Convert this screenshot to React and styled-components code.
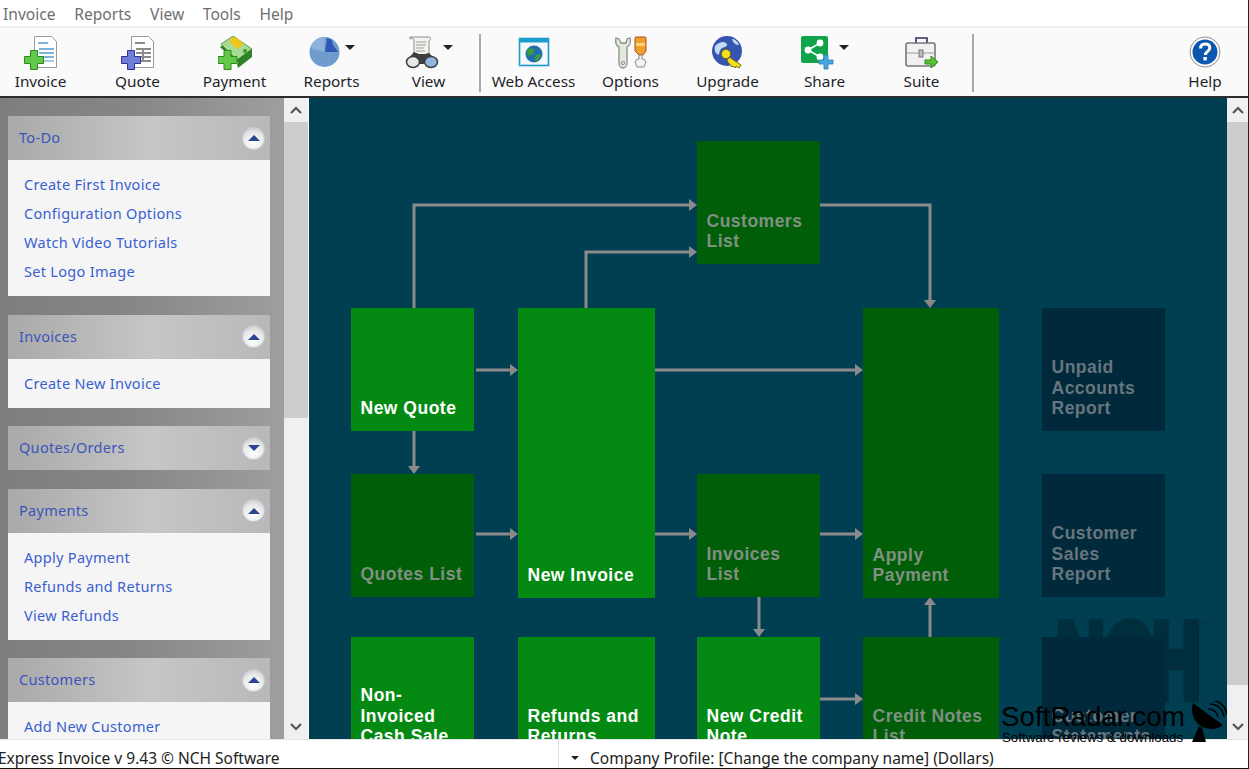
import React from "react";
import styled, { createGlobalStyle } from "styled-components";

const GlobalStyle = createGlobalStyle`
  html, body {
    margin: 0;
    height: 100%;
    overflow: hidden;
    background: #fff;
  }
  * { box-sizing: border-box; }
`;

const uiFont = `"Noto Sans", "Open Sans", sans-serif`;

const Shell = styled.div`
  position: relative;
  width: 1249px;
  height: 769px;
  display: flex;
  flex-direction: column;
  overflow: hidden;
  font-family: ${uiFont};
  border-right: 1px solid #222;
`;

const MenuBar = styled.nav`
  height: 28px;
  flex: none;
  display: flex;
  align-items: center;
  gap: 18.7px;
  padding: 1px 0 0 3px;
  background: #fff;
  border-bottom: 2px solid #f1f1f1;
`;

const MenuItem = styled.span`
  font-size: 15.6px;
  color: #6f6f6f;
`;

const Toolbar = styled.div`
  height: 70px;
  flex: none;
  display: flex;
  align-items: stretch;
  background: #fafafa;
  border-bottom: 2px solid #2c2c2c;
`;

const ToolButton = styled.button`
  width: ${(p) => p.$width || 97}px;
  margin-left: ${(p) => (p.$push ? "auto" : `${p.$shift || 0}px`)};
  flex: none;
  border: 0;
  background: none;
  padding: 8px 0 0;
  display: flex;
  flex-direction: column;
  align-items: center;
  font-family: inherit;
`;

const IconRow = styled.span`
  height: 35px;
  display: flex;
  align-items: flex-start;
  gap: 4px;
`;

const Caret = styled.i`
  width: 0;
  height: 0;
  margin-top: 9px;
  border-left: 5px solid transparent;
  border-right: 5px solid transparent;
  border-top: 5px solid #222;
`;

const ToolLabel = styled.span`
  font-size: 15.3px;
  line-height: 20px;
  color: #1f1f2a;
  white-space: nowrap;
`;

const ToolSep = styled.span`
  width: 2px;
  margin: 6px 4.5px 4px 1.5px;
  flex: none;
  background: #a8a8a8;
`;

const Main = styled.div`
  flex: 1;
  min-height: 0;
  display: flex;
`;

const Sidebar = styled.aside`
  width: 284px;
  flex: none;
  overflow: hidden;
  padding: 18px 14px 0 8px;
  display: flex;
  flex-direction: column;
  gap: 18.6px;
  background: linear-gradient(90deg, #7e7e7e 0%, #868686 45%, #9e9e9e 100%);
`;

const Panel = styled.section`
  flex: none;
`;

const PanelHead = styled.header`
  height: 44px;
  display: flex;
  align-items: center;
  justify-content: space-between;
  padding: 0 5px 0 11px;
  background: linear-gradient(90deg, #a9a9a9 0%, #c6c6c6 55%, #b8b8b8 100%);
`;

const PanelTitle = styled.span`
  margin-top: -2px;
  font-size: 14.5px;
  letter-spacing: 0.3px;
  color: #3a55bb;
`;

const Toggle = styled.span`
  width: 23px;
  height: 23px;
  border-radius: 50%;
  display: flex;
  align-items: center;
  justify-content: center;
  border: 1px solid #c9cce0;
  background: radial-gradient(circle at 50% 70%, #ffffff 0%, #e9e9e9 55%, #bcbcbc 100%);

  &::after {
    content: "";
    width: 0;
    height: 0;
    border-left: 6px solid transparent;
    border-right: 6px solid transparent;
    border-${(p) => (p.$down ? "top" : "bottom")}: 6px solid #2c4590;
  }
`;

const PanelBody = styled.div`
  padding: 10px 16px;
  background: #f5f5f5;
`;

const TaskLink = styled.a`
  display: block;
  font-size: 14.5px;
  line-height: 29px;
  letter-spacing: 0.3px;
  color: #3a5fd0;
  white-space: nowrap;
`;

const ScrollTrack = styled.div`
  width: ${(p) => p.$width}px;
  flex: none;
  display: flex;
  flex-direction: column;
  background: #f0f0f0;
  border-right: ${(p) => (p.$gap ? "1px solid #fff" : "0")};
`;

const ScrollEnd = styled.div`
  height: 24px;
  flex: none;
  display: flex;
  align-items: center;
  justify-content: center;
`;

const ScrollThumb = styled.div`
  height: ${(p) => p.$height}px;
  flex: none;
  background: #cdcdcd;
`;

const ScrollSpace = styled.div`
  flex: 1;
`;

const Canvas = styled.main`
  position: relative;
  flex: 1;
  min-width: 0;
  overflow: hidden;
  background: #003f52;
`;

const Wires = styled.svg`
  position: absolute;
  inset: 0;
`;

const nodeColors = {
  bright: "background:#048a13;color:#fff;",
  dim: "background:#005e08;color:#809082;",
  navy: "background:#00293b;color:#67757e;",
};

const Node = styled.div`
  position: absolute;
  left: ${(p) => p.$x - 309}px;
  top: ${(p) => p.$y - 98}px;
  width: ${(p) => p.$w}px;
  height: ${(p) => p.$h}px;
  display: flex;
  align-items: flex-end;
  padding: 0 0 12px 9.5px;
  font-family: "Liberation Sans", Arial, sans-serif;
  font-size: 17.5px;
  font-weight: 700;
  line-height: 20.6px;
  letter-spacing: 0.5px;
  white-space: nowrap;
  ${(p) => nodeColors[p.$tone]}
`;

const BrandMark = styled.div`
  position: absolute;
  left: 747px;
  top: 510px;
  font-family: "Liberation Sans", Arial, sans-serif;
  font-size: 107px;
  font-weight: 700;
  line-height: 1;
  letter-spacing: -1px;
  color: #002e3c;
  -webkit-text-stroke: 9px #002e3c;
  transform: scaleX(0.63);
  transform-origin: left top;
`;

const BrandReg = styled.span`
  position: absolute;
  left: 891px;
  top: 521px;
  font-family: "Liberation Sans", Arial, sans-serif;
  font-size: 8px;
  color: #00303e;
`;

const StatusBar = styled.footer`
  height: 30px;
  flex: none;
  display: flex;
  align-items: center;
  background: #fff;
  border-top: 1px solid #e6e6e6;
  border-bottom: 1px solid #111;
  font-size: 15.5px;
  color: #222;
`;

const StatusLeft = styled.span`
  width: 560px;
  flex: none;
  margin-left: -2px;
  padding-top: 7px;
  white-space: nowrap;
`;

const StatusRight = styled.div`
  height: 100%;
  display: flex;
  align-items: center;
  gap: 11px;
  padding: 7px 0 0 12px;
  border-left: 1px solid #dcdcdc;
  white-space: nowrap;
`;

const StatusCaret = styled.i`
  width: 0;
  height: 0;
  border-left: 4px solid transparent;
  border-right: 4px solid transparent;
  border-top: 4px solid #222;
`;

const Watermark = styled.div`
  position: absolute;
  left: 1001px;
  top: 701px;
  width: 226px;
  display: flex;
  gap: 6px;
  font-family: "Liberation Sans", Arial, sans-serif;
  color: #000;
`;

const WatermarkText = styled.div`
  display: flex;
  flex-direction: column;
`;

const WatermarkName = styled.span`
  font-size: 27.8px;
  line-height: 31px;
  white-space: nowrap;
`;

const WatermarkSub = styled.span`
  font-size: 13.3px;
  line-height: 12px;
  margin-left: 1px;
  white-space: nowrap;
`;

const Dish = styled.svg`
  flex: none;
`;

const Plus = ({ x, y, fill, stroke }) => (
  <path
    d={`M${x + 6} ${y}h7v6h6v7h-6v6h-7v-6h-6v-7h6z`}
    fill={fill}
    stroke={stroke}
    strokeWidth="1"
  />
);

const InvoiceIcon = () => (
  <svg width="34" height="34" viewBox="0 0 34 34">
    <path d="M10.5.5h17l5 5v26h-22z" fill="#fff" stroke="#9a9a9a" />
    <path d="M14 6h10v2H14zM15 12h15v2H15zM15 16h15v2H15zM15 20h15v2H15z" fill="#7fb3dc" />
    <path d="M15 24h15v2H15z" fill="#a9cde8" />
    <Plus x={0.5} y={14.5} fill="#63c94a" stroke="#2d8a20" />
  </svg>
);

const QuoteIcon = () => (
  <svg width="34" height="34" viewBox="0 0 34 34">
    <path d="M10.5.5h17l5 5v26h-22z" fill="#fff" stroke="#9a9a9a" />
    <path d="M14 6h10v2H14zM15 12h15v2H15zM15 16h15v2H15zM15 20h15v2H15zM15 24h15v2H15zM21 12h2v14h-2z" fill="#8c8c8c" />
    <Plus x={0.5} y={14.5} fill="#6f7fd6" stroke="#38309a" />
  </svg>
);

const PaymentIcon = () => (
  <svg width="34" height="34" viewBox="0 0 34 34">
    <path d="M2 11 16 1l18 13-15 12z" fill="#2f8226" />
    <path d="M3 8 15 0l19 13-15 11z" fill="#a7dc96" stroke="#3f8f2c" strokeWidth=".8" />
    <path d="M12 2l6-1 8 7-6 5-8-6z" fill="#eec51f" />
    <circle cx="27" cy="15" r="2.2" fill="#4c9c3a" />
    <path d="M19 24l15-11v4L20 28zM19 28l15-11v4L20 32z" fill="#2f8226" />
    <Plus x={0} y={14.5} fill="#63c94a" stroke="#2d8a20" />
  </svg>
);

const ReportsIcon = () => (
  <svg width="32" height="32" viewBox="0 0 32 32">
    <circle cx="15.5" cy="16" r="15" fill="#6f9bcf" />
    <path d="M15.5 16V1C10 1 4 5 1.5 12z" fill="#8fb2da" />
    <path d="M16 16l2-14 5 2 1 5 5 7z" fill="#2f57b5" />
  </svg>
);

const ViewIcon = () => (
  <svg width="34" height="34" viewBox="0 0 34 34">
    <path d="M5 1h19c2 0 2 3 0 4v14H9V4C9 2 7 2 5 3z" fill="#f4f4ef" stroke="#8a8a8a" />
    <path d="M11 6h10M11 9h10M11 12h8M11 15h9" stroke="#9a9a9a" />
    <path d="M2 24l7-8 5 2h6l4-1 8 8-4 3H6z" fill="#3f3f3f" />
    <ellipse cx="8" cy="26" rx="6.5" ry="5.5" fill="#e4e8ea" stroke="#3c3c3c" strokeWidth="1.5" />
    <ellipse cx="26" cy="26" rx="6.5" ry="5.5" fill="#8fb7e2" stroke="#3c3c3c" strokeWidth="1.5" />
  </svg>
);

const WebIcon = () => (
  <svg width="32" height="32" viewBox="0 0 32 32">
    <rect x="1.5" y="2.5" width="29" height="27" fill="#f3f8fb" stroke="#1b9ccc" strokeWidth="1.6" />
    <rect x="1.5" y="2.5" width="29" height="4" fill="#1b9ccc" />
    <circle cx="16" cy="18" r="8.5" fill="#1f6fb0" />
    <path d="M10 13c4-2 7 0 6 3s-5 2-5 5c-2-2-3-5-1-8zM18 19c3-1 5 0 5 1-1 3-4 5-6 5 0-2-1-4 1-6z" fill="#3c9a3a" />
  </svg>
);

const OptionsIcon = () => (
  <svg width="32" height="33" viewBox="0 0 32 33">
    <path d="M1 2c-1 5 1 8 3 9v16c0 3 2 5 4 5s4-2 4-5V11c3-1 4-5 3-9l-3 1-1 4H6L4 3z" fill="#dfe9dc" stroke="#8c8c8c" strokeWidth="1.3" />
    <circle cx="8" cy="27" r="1.6" fill="none" stroke="#8c8c8c" />
    <path d="M21 1h9c1 0 1 1 1 2v12l-3 4h-4l-4-4V3c0-1 0-2 1-2z" fill="#ef9f2a" stroke="#b5482b" />
    <path d="M21 7h9v3h-9z" fill="#f6d67a" />
    <path d="M24 19h3v4h2l2 3-2 5h-7l-2-5 2-3h2z" fill="#f2f2f2" stroke="#8c8c8c" />
  </svg>
);

const UpgradeIcon = () => (
  <svg width="34" height="34" viewBox="0 0 34 34">
    <circle cx="16" cy="15" r="15" fill="#3555b0" />
    <path d="M4 10c5-5 10-5 12-2 1 3-4 3-6 5s-1 5-3 6c-3-2-4-5-3-9zM21 3c3 0 6 3 7 6-3 0-6-2-7-6z" fill="#c4d9ef" />
    <circle cx="15" cy="18" r="4.6" fill="#f5e21a" stroke="#7a6a10" />
    <path d="M18 21l12 8-2 3-3-2-1 2-2-2-1 1-5-6z" fill="#f5e21a" stroke="#7a6a10" />
  </svg>
);

const ShareIcon = () => (
  <svg width="34" height="34" viewBox="0 0 34 34">
    <rect x="0" y="0" width="27" height="27" rx="2" fill="#0fa44a" />
    <path d="M19 7L7 14l12 7" fill="none" stroke="#fff" strokeWidth="1.6" />
    <circle cx="19" cy="7" r="3.4" fill="#fff" />
    <circle cx="7" cy="14" r="3.4" fill="#fff" />
    <circle cx="19" cy="21" r="3.4" fill="#fff" />
    <path d="M23 19h4v5h5v4h-5v5h-4v-5h-5v-4h5z" fill="#4aa8de" stroke="#1d7fb8" strokeWidth=".8" />
  </svg>
);

const SuiteIcon = () => (
  <svg width="34" height="34" viewBox="0 0 34 34">
    <path d="M11 7V2h11v5" fill="none" stroke="#30305a" strokeWidth="1.6" />
    <rect x="1" y="7" width="29" height="23" rx="2" fill="#f1f1f1" stroke="#777" strokeWidth="1.6" />
    <path d="M1 17h29" stroke="#999" />
    <rect x="14" y="14" width="4" height="7" fill="#bbb" stroke="#777" />
    <path d="M20 24h6v-4l7 6-7 6v-4h-6z" fill="#59c234" stroke="#2d8a20" />
  </svg>
);

const HelpIcon = () => (
  <svg width="32" height="32" viewBox="0 0 32 32">
    <circle cx="16" cy="16" r="15" fill="#fff" stroke="#8d8d8d" />
    <circle cx="16" cy="16" r="12.5" fill="#0b57b0" />
    <path d="M11.5 12.5c0-3 2-4.5 4.700-4.5s4.600 1.500 4.600 3.900c0 3.500-4.400 3.500-4.400 7" fill="none" stroke="#fff" strokeWidth="3" />
    <rect x="14.4" y="21" width="3.4" height="3.4" fill="#fff" />
  </svg>
);

const ChevronUp = () => (
  <svg width="14" height="10" viewBox="0 0 14 10">
    <path d="M2 8l5-5 5 5" fill="none" stroke="#555" strokeWidth="2.2" />
  </svg>
);

const ChevronDown = () => (
  <svg width="14" height="10" viewBox="0 0 14 10">
    <path d="M2 2l5 5 5-5" fill="none" stroke="#555" strokeWidth="2.2" />
  </svg>
);

const DishIcon = () => (
  <Dish width="36" height="42" viewBox="0 0 36 42">
    <path d="M2 2c-3 10 1 21 12 25 7 2 13 1 18-3z" fill="#000" />
    <path d="M8 25 1 41h14l-4-14z" fill="#000" />
    <path d="M17 8c5 0 9 3 10 8M19 3c7 0 13 5 14 13M21-1c8 1 14 7 15 15" fill="none" stroke="#000" strokeWidth="1.6" />
  </Dish>
);

const tools = [
  { label: "Invoice", icon: InvoiceIcon, shift: -8 },
  { label: "Quote", icon: QuoteIcon },
  { label: "Payment", icon: PaymentIcon },
  { label: "Reports", icon: ReportsIcon, caret: true },
  { label: "View", icon: ViewIcon, caret: true },
  { sep: true },
  { label: "Web Access", icon: WebIcon },
  { label: "Options", icon: OptionsIcon },
  { label: "Upgrade", icon: UpgradeIcon },
  { label: "Share", icon: ShareIcon, caret: true },
  { label: "Suite", icon: SuiteIcon },
  { sep: true },
];

const panels = [
  { title: "To-Do", links: ["Create First Invoice", "Configuration Options", "Watch Video Tutorials", "Set Logo Image"] },
  { title: "Invoices", links: ["Create New Invoice"] },
  { title: "Quotes/Orders", closed: true },
  { title: "Payments", links: ["Apply Payment", "Refunds and Returns", "View Refunds"] },
  { title: "Customers", links: ["Add New Customer", "Customer List"] },
];

const nodes = [
  { x: 697, y: 141, w: 123, h: 123, tone: "dim", text: ["Customers", "List"] },
  { x: 351, y: 308, w: 123, h: 123, tone: "bright", text: ["New Quote"] },
  { x: 518, y: 308, w: 137, h: 290, tone: "bright", text: ["New Invoice"] },
  { x: 863, y: 308, w: 136, h: 290, tone: "dim", text: ["Apply", "Payment"] },
  { x: 1042, y: 308, w: 123, h: 123, tone: "navy", text: ["Unpaid", "Accounts", "Report"] },
  { x: 351, y: 474, w: 123, h: 123, tone: "dim", text: ["Quotes List"] },
  { x: 697, y: 474, w: 123, h: 123, tone: "dim", text: ["Invoices", "List"] },
  { x: 1042, y: 474, w: 123, h: 123, tone: "navy", text: ["Customer", "Sales", "Report"] },
  { x: 351, y: 637, w: 123, h: 122, tone: "bright", text: ["Non-", "Invoiced", "Cash Sale"] },
  { x: 518, y: 637, w: 137, h: 122, tone: "bright", text: ["Refunds and", "Returns"] },
  { x: 697, y: 637, w: 123, h: 122, tone: "bright", text: ["New Credit", "Note"] },
  { x: 863, y: 637, w: 136, h: 122, tone: "dim", text: ["Credit Notes", "List"] },
  { x: 1042, y: 637, w: 123, h: 122, tone: "navy", text: ["Customer", "Statements"] },
];

const wires = [
  "M414 308V205H690",
  "M586 308V252H690",
  "M820 205H930V301",
  "M476 370H511",
  "M655 370H856",
  "M414 431V467",
  "M476 534H511",
  "M655 534H690",
  "M820 534H856",
  "M759 597V630",
  "M930 637V604",
  "M820 699H856",
];

const heads = [
  "M697 205l-8-6v12z",
  "M697 252l-8-6v12z",
  "M930 308l-6-8h12z",
  "M518 370l-8-6v12z",
  "M863 370l-8-6v12z",
  "M414 474l-6-8h12z",
  "M518 534l-8-6v12z",
  "M697 534l-8-6v12z",
  "M863 534l-8-6v12z",
  "M759 637l-6-8h12z",
  "M930 597l-6 8h12z",
  "M863 699l-8-6v12z",
];

function Scrollbar({ width, thumb, gap }) {
  return (
    <ScrollTrack $width={width} $gap={gap}>
      <ScrollEnd><ChevronUp /></ScrollEnd>
      <ScrollThumb $height={thumb} />
      <ScrollSpace />
      <ScrollEnd><ChevronDown /></ScrollEnd>
    </ScrollTrack>
  );
}

export default function App() {
  return (
    <Shell>
      <GlobalStyle />
      <MenuBar>
        {["Invoice", "Reports", "View", "Tools", "Help"].map((m) => (
          <MenuItem key={m}>{m}</MenuItem>
        ))}
      </MenuBar>

      <Toolbar>
        {tools.map((t, i) => {
          if (t.sep) return <ToolSep key={i} />;
          const Icon = t.icon;
          return (
            <ToolButton key={t.label} $shift={t.shift}>
              <IconRow>
                <Icon />
                {t.caret && <Caret />}
              </IconRow>
              <ToolLabel>{t.label}</ToolLabel>
            </ToolButton>
          );
        })}
        <ToolButton $width={86} $push>
          <IconRow><HelpIcon /></IconRow>
          <ToolLabel>Help</ToolLabel>
        </ToolButton>
      </Toolbar>

      <Main>
        <Sidebar>
          {panels.map((p) => (
            <Panel key={p.title}>
              <PanelHead>
                <PanelTitle>{p.title}</PanelTitle>
                <Toggle $down={p.closed} />
              </PanelHead>
              {p.links && (
                <PanelBody>
                  {p.links.map((l) => (
                    <TaskLink key={l}>{l}</TaskLink>
                  ))}
                </PanelBody>
              )}
            </Panel>
          ))}
        </Sidebar>
        <Scrollbar width={25} thumb={296} gap />

        <Canvas>
          <BrandMark>NCH</BrandMark>
          <BrandReg>®</BrandReg>
          <Wires width="918" height="640" viewBox="309 98 918 640">
            {wires.map((d) => (
              <path key={d} d={d} fill="none" stroke="#8a8a8a" strokeWidth="3" />
            ))}
            {heads.map((d) => (
              <path key={d} d={d} fill="#8a8a8a" />
            ))}
          </Wires>
          {nodes.map((n) => (
            <Node key={n.text.join(" ")} $x={n.x} $y={n.y} $w={n.w} $h={n.h} $tone={n.tone}>
              <div>
                {n.text.map((line) => (
                  <div key={line}>{line}</div>
                ))}
              </div>
            </Node>
          ))}
        </Canvas>
        <Scrollbar width={21} thumb={563} />
      </Main>

      <StatusBar>
        <StatusLeft>Express Invoice v 9.43 © NCH Software</StatusLeft>
        <StatusRight>
          <StatusCaret />
          <span>Company Profile: [Change the company name] (Dollars)</span>
        </StatusRight>
      </StatusBar>

      <Watermark>
        <WatermarkText>
          <WatermarkName>SoftRadar.com</WatermarkName>
          <WatermarkSub>Software reviews &amp; downloads</WatermarkSub>
        </WatermarkText>
        <DishIcon />
      </Watermark>
    </Shell>
  );
}
